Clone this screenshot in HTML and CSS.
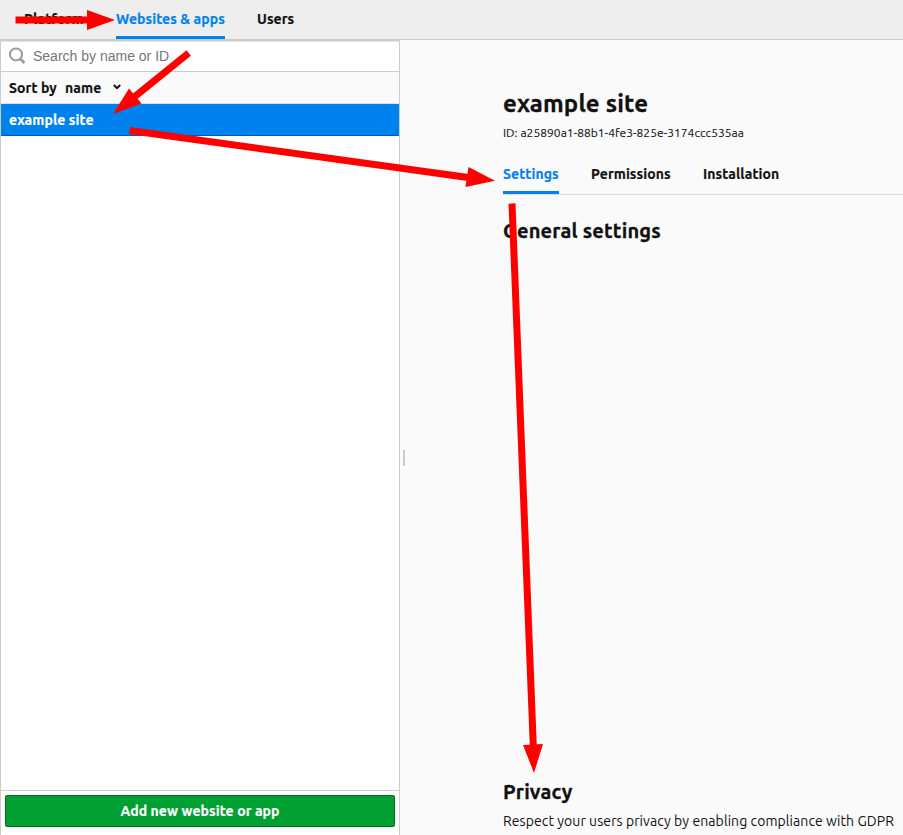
FILE: index.html
```html
<!DOCTYPE html>
<html lang="en">
<head>
<meta charset="utf-8">
<title>Websites &amp; apps</title>
<link rel="stylesheet" href="styles.css">
</head>
<body>
<div class="app">
  <nav class="topbar">
    <a class="tab t-platform">Platform</a>
    <a class="tab t-websites active">Websites &amp; apps</a>
    <a class="tab t-users">Users</a>
  </nav>
  <div class="body">
    <aside class="sidebar">
      <label class="search">
        <svg class="search-icon" width="18" height="18" viewBox="0 0 18 18"><circle cx="7" cy="7.400" r="6" fill="none" stroke="#999" stroke-width="2"/><path d="M11.400 12l4 4" stroke="#999" stroke-width="2.600"/></svg>
        <span>Search by name or ID</span>
      </label>
      <div class="sort"><span class="t-sort">Sort by</span><span class="t-name">name</span>
        <svg class="chevron" width="8" height="6" viewBox="0 0 8 6"><path d="M.8 1L4 4.200 7.200 1" fill="none" stroke="#111" stroke-width="1.900"/></svg>
      </div>
      <div class="row"><span>example site</span></div>
      <div class="list"></div>
      <footer class="footer"><button class="add">Add new website or app</button></footer>
    </aside>
    <div class="splitter"><i class="grip"></i></div>
    <main class="main">
      <h1>example site</h1>
      <p class="id">ID: a25890a1-88b1-4fe3-825e-3174ccc535aa</p>
      <nav class="tabs">
        <a class="tab t-settings active">Settings</a>
        <a class="tab t-permissions">Permissions</a>
        <a class="tab t-installation">Installation</a>
      </nav>
      <section class="general"><h2>General settings</h2></section>
      <section><h2>Privacy</h2>
      <p class="desc">Respect your users privacy by enabling compliance with GDPR</p></section>
    </main>
  </div>
  <svg class="arrows" width="903" height="835" viewBox="0 0 903 835">
    <g stroke="#f00" stroke-width="7" fill="none"><path d="M15.500 20H89"/><path d="M188.700 53L133 98"/><path d="M129.500 130.500L468 177.500"/><path d="M512 203.500L533.300 746"/></g>
    <g fill="#f00"><path d="M87 10L115 20 87 30z"/><path d="M129 88.500L113 114 141.500 103.500z"/><path d="M468.500 167L495 180.700 465.500 187z"/><path d="M523 745L543 744 534 773z"/></g>
  </svg>
</div>
</body>
</html>
```
FILE: styles.css
```css
* { box-sizing: border-box; }
body { margin: 0; background: #fafafa; color: #111; font: 14px/20px Ubuntu, "Noto Sans", sans-serif; }
h1, h2, p { margin: 0; white-space: nowrap; }
span, a { white-space: nowrap; }
.app { position: relative; display: flex; flex-direction: column; width: 903px; height: 835px; overflow: hidden; }
.topbar { display: flex; gap: 32px; height: 40px; flex: none; padding-left: 24px; background: #eee; border-bottom: 1px solid #ccc; }
.tab, .sort, .row, .add { letter-spacing: .09px; -webkit-text-stroke: .2px currentColor; }
.tab { font-weight: 700; line-height: 38px; border-bottom: 3px solid transparent; }
.tab.active { color: #0082ee; border-color: #0082ee; }
.topbar .tab { height: 39px; }
.t-platform { width: 60px; }
.t-websites { width: 109px; }
.t-users { width: 38px; }
.body { display: flex; flex: 1; min-height: 0; }
.sidebar { display: flex; flex-direction: column; width: 400px; background: #fff; border: 1px solid #ccc; border-bottom: 0; }
.search { display: flex; align-items: center; height: 31px; padding: 0 0 1px 8px; gap: 6px; border-top: 1px solid #e4e4e4; border-bottom: 1px solid #ccc; color: #777; font: 14px "Liberation Sans", sans-serif; }
.sort { display: flex; align-items: center; height: 32px; padding-left: 8px; background: #fafafa; border-bottom: 1px solid #ddd; font-weight: 700; }
.t-sort { width: 56px; }
.t-name { width: 48px; }
.chevron { margin-top: -2px; }
.row { height: 32px; padding-left: 8px; line-height: 32px; background: #0082ee; border-bottom: 1px solid #0058b8; color: #fff; font-weight: 700; }
.list { flex: 1; }
.footer { height: 45px; padding: 4px; border-top: 1px solid #ccc; }
.add { display: block; width: 390px; height: 32px; padding: 0; background: #00a033; border: 1px solid #006b22; border-radius: 2px; color: #fff; font: 700 14px/28px Ubuntu, "Noto Sans", sans-serif; }
.splitter { display: flex; align-items: center; width: 8px; padding-left: 3px; }
.grip { width: 2px; height: 16px; margin-top: 41px; background: #ccc; }
.main { flex: 1; padding: 48px 0 0 95px; min-width: 0; }
h1, h2 { letter-spacing: .18px; -webkit-text-stroke: .3px currentColor; }
h1 { font-size: 24px; line-height: 32px; font-weight: 700; }
.id { margin-top: 5px; font-size: 12px; line-height: 16px; letter-spacing: .04px; -webkit-text-stroke: .1px currentColor; }
.tabs { display: flex; gap: 32px; height: 41px; margin-top: 13px; border-bottom: 1px solid #ddd; }
.tabs .tab { height: 40px; line-height: 40px; }
.t-settings { width: 56px; }
.t-permissions { width: 80px; }
.t-installation { width: 77px; }
h2 { font-size: 20px; line-height: 28px; font-weight: 700; }
.general { height: 583px; padding-top: 22px; }
.desc { margin-top: 5px; letter-spacing: .08px; }
.arrows { position: absolute; inset: 0; pointer-events: none; }
```
